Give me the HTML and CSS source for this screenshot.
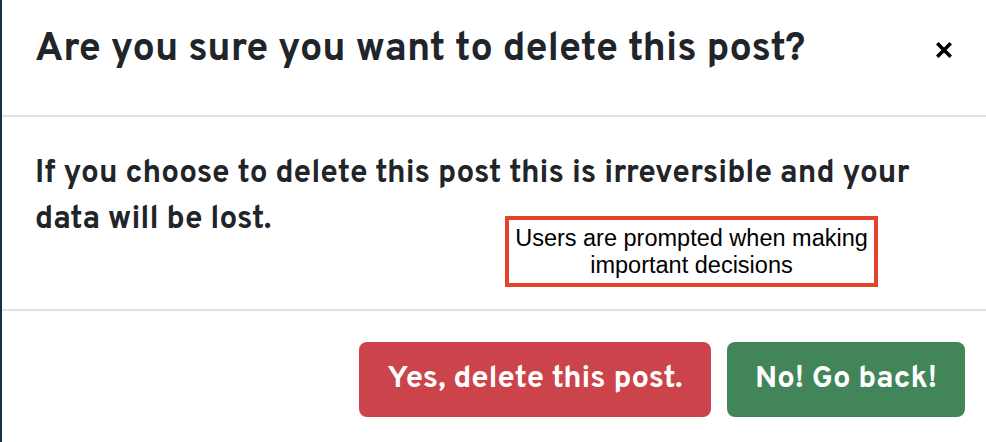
FILE: index.html
```html
<!DOCTYPE html>
<html lang="en">
<head>
<meta charset="utf-8">
<title>Delete post</title>
<link rel="stylesheet" href="styles.css">
</head>
<body>
<div class="backdrop">
  <div class="modal" role="dialog" aria-labelledby="modal-title">
    <header class="modal-header">
      <h1 class="modal-title" id="modal-title">Are you sure you want to delete this post?</h1>
      <button class="close" type="button" aria-label="Close">
        <svg width="16" height="16" viewBox="0 0 16 16" aria-hidden="true">
          <path d="M2.5 2.5 L13.5 13.5 M13.5 2.5 L2.5 13.5" stroke="#000" stroke-width="3.6" stroke-linecap="square"/>
        </svg>
      </button>
    </header>
    <section class="modal-body">
      <p class="modal-text">If you choose to delete this post this is irreversible and your data will be lost.</p>
      <div class="annotation">Users are prompted when making<br>important decisions</div>
    </section>
    <footer class="modal-footer">
      <button class="btn btn-danger" type="button">Yes, delete this post.</button>
      <button class="btn btn-success" type="button">No! Go back!</button>
    </footer>
  </div>
</div>
</body>
</html>
```
FILE: styles.css
```css
* { box-sizing: border-box; }

html, body {
  margin: 0;
  padding: 0;
  background: #ffffff;
}

body {
  font-family: "Overpass", "Lato", "Liberation Sans", sans-serif;
  color: #212529;
}

.backdrop {
  width: 986px;
  height: 442px;
  border-left: 2px solid #13314b;
  overflow: hidden;
}

.modal {
  display: flex;
  flex-direction: column;
  height: 100%;
  background: #ffffff;
}

.modal-header {
  display: flex;
  align-items: flex-start;
  justify-content: space-between;
  height: 117px;
  padding: 26px 34px 0 33px;
  border-bottom: 2px solid #dee2e6;
}

.modal-title {
  margin: 0;
  font-size: 39.5px;
  font-weight: 700;
  line-height: 48px;
  color: #212529;
}

.close {
  margin: 16px 0 0 0;
  padding: 0;
  border: 0;
  background: transparent;
  width: 16px;
  height: 16px;
  display: flex;
}

.modal-body {
  position: relative;
  height: 194px;
  padding: 34px 40px 0 33px;
  border-bottom: 2px solid #dee2e6;
}

.modal-text {
  margin: 0;
  font-size: 31.5px;
  font-weight: 700;
  line-height: 46px;
  color: #212529;
}

.annotation {
  position: absolute;
  left: 503px;
  top: 99px;
  width: 373px;
  height: 71px;
  border: 4px solid #e5432b;
  background: #ffffff;
  font-family: "Liberation Sans", Arial, sans-serif;
  font-size: 23.5px;
  line-height: 27px;
  color: #000000;
  text-align: center;
  white-space: nowrap;
  display: flex;
  align-items: center;
  justify-content: center;
  padding: 0;
}

.modal-footer {
  display: flex;
  justify-content: flex-end;
  gap: 16px;
  padding: 31px 21px 0 0;
}

.btn {
  height: 75px;
  padding: 0;
  border: 0;
  border-radius: 8px;
  font-family: "Overpass", "Lato", "Liberation Sans", sans-serif;
  font-size: 31px;
  font-weight: 700;
  color: #ffffff;
  white-space: nowrap;
  display: flex;
  align-items: center;
  justify-content: center;
}

.btn-danger {
  width: 352px;
  background: #cb444b;
}

.btn-success {
  width: 238px;
  background: #418558;
}
```
